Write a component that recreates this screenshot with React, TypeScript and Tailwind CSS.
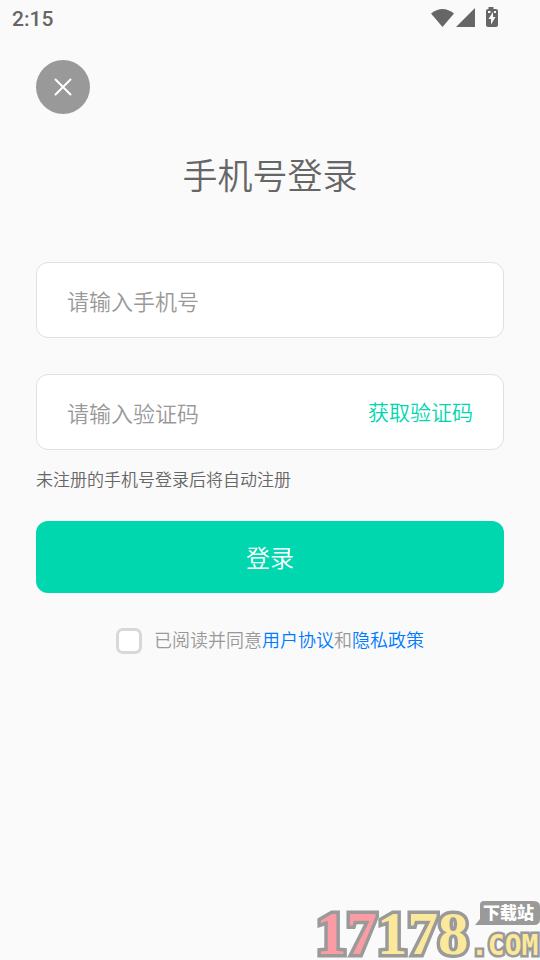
import { useState } from "react";

function StatusBar() {
  return (
    <div className="flex h-9 items-center justify-between pl-3 pr-10 text-[#666666]">
      <span className="pt-px font-['Roboto',sans-serif] text-[21px] font-medium leading-6">2:15</span>
      <div className="flex items-center">
        <svg width="72" height="24" viewBox="0 0 72 24" fill="currentColor" aria-hidden="true">
          <path d="M3 7.500Q14.500-1.500 26 7.500L14.500 21Z" />
          <path d="M47 2V21H28Z" />
          <path
            fillRule="evenodd"
            d="M60.500 1h5v2H68q2 0 2 2v14q0 2-2 2h-8q-2 0-2-2V5q0-2 2-2h.500ZM65 6l-4.500 7H63v5.500l4.500-7.500H65ZM60 5v2h2.500V5ZM66 5v2h2V5Z"
          />
        </svg>
      </div>
    </div>
  );
}

function SiteBadge() {
  return (
    <svg width="224" height="62" viewBox="0 0 224 62" className="mt-auto block self-end" role="img" aria-label="17178.com 下载站">
      <g
        fontFamily="'Liberation Serif', serif"
        fontWeight="700"
        fontSize="61"
        stroke="#9a9a9a"
        strokeWidth="7"
        strokeLinejoin="miter"
        paintOrder="stroke"
      >
        <text x="0" y="56">
          <tspan fill="#fb9ca4">17</tspan>
          <tspan fill="#fbe89a">178</tspan>
        </text>
      </g>
      <path d="M168 3h50q6 0 6 6v12q0 6-6 6h-59l5-6V7q0-4 4-4Z" fill="#9a9a9a" />
      <text x="167" y="21" fontFamily="'Noto Sans CJK SC', sans-serif" fontWeight="900" fontSize="17" fill="#ffffff">
        下载站
      </text>
      <text
        x="155"
        y="57"
        fontFamily="'DejaVu Sans Mono', monospace"
        fontWeight="700"
        fontSize="28"
        fill="#fbe89a"
        stroke="#9a9a9a"
        strokeWidth="5"
        paintOrder="stroke"
      >
        .COM
      </text>
    </svg>
  );
}

export default function App() {
  const [phone, setPhone] = useState("");
  const [code, setCode] = useState("");
  const [agreed, setAgreed] = useState(false);

  return (
    <div className="flex min-h-screen flex-col bg-[#fafafa] font-['Noto_Sans_CJK_SC',sans-serif] font-[350]">
      <StatusBar />

      <main className="px-9 pt-6">
        <button
          type="button"
          aria-label="关闭"
          className="flex size-[54px] items-center justify-center rounded-full bg-[#999999] text-white"
        >
          <svg width="20" height="20" viewBox="0 0 20 20" stroke="currentColor" strokeWidth="2" strokeLinecap="round">
            <path d="M2.500 2.500l15 15M17.500 2.500l-15 15" />
          </svg>
        </button>

        <h1 className="mt-9 text-center text-[35px] font-[350] leading-[48px] text-[#666666]">手机号登录</h1>

        <form onSubmit={(e) => e.preventDefault()}>
          <input
            type="tel"
            aria-label="手机号"
            value={phone}
            onChange={(e) => setPhone(e.target.value)}
            placeholder="请输入手机号"
            className="mt-16 block h-[76px] w-full rounded-xl border border-[#e0e0e0] bg-white px-[30px] text-[22px] text-[#333333] outline-none placeholder:text-[#999999]"
          />

          <div className="mt-9 flex h-[76px] items-center rounded-xl border border-[#e0e0e0] bg-white px-[30px] text-[22px]">
            <input
              type="text"
              inputMode="numeric"
              aria-label="验证码"
              value={code}
              onChange={(e) => setCode(e.target.value)}
              placeholder="请输入验证码"
              className="min-w-0 flex-1 text-[#333333] outline-none placeholder:text-[#999999]"
            />
            <button type="button" className="text-[21px] text-[#00d7af]">
              获取验证码
            </button>
          </div>

          <p className="mt-4 text-[17px] leading-[26px] text-[#666666]">未注册的手机号登录后将自动注册</p>

          <button
            type="submit"
            className="mt-[29px] block h-[72px] w-full rounded-xl bg-[#00d7af] text-[24px] text-white"
          >
            登录
          </button>

          <div className="mt-[34px] flex items-start justify-center gap-3 text-[18px] leading-6 text-[#999999]">
            <input
              id="agree"
              type="checkbox"
              checked={agreed}
              onChange={(e) => setAgreed(e.target.checked)}
              className="mt-px size-[26px] appearance-none rounded-[7px] border-3 border-[#d8d8d8] bg-white checked:bg-[#00d7af]"
            />
            <label htmlFor="agree">
              已阅读并同意
              <a href="#terms" className="text-[#007aff]">用户协议</a>
              和
              <a href="#privacy" className="text-[#007aff]">隐私政策</a>
            </label>
          </div>
        </form>
      </main>

      <SiteBadge />
    </div>
  );
}
